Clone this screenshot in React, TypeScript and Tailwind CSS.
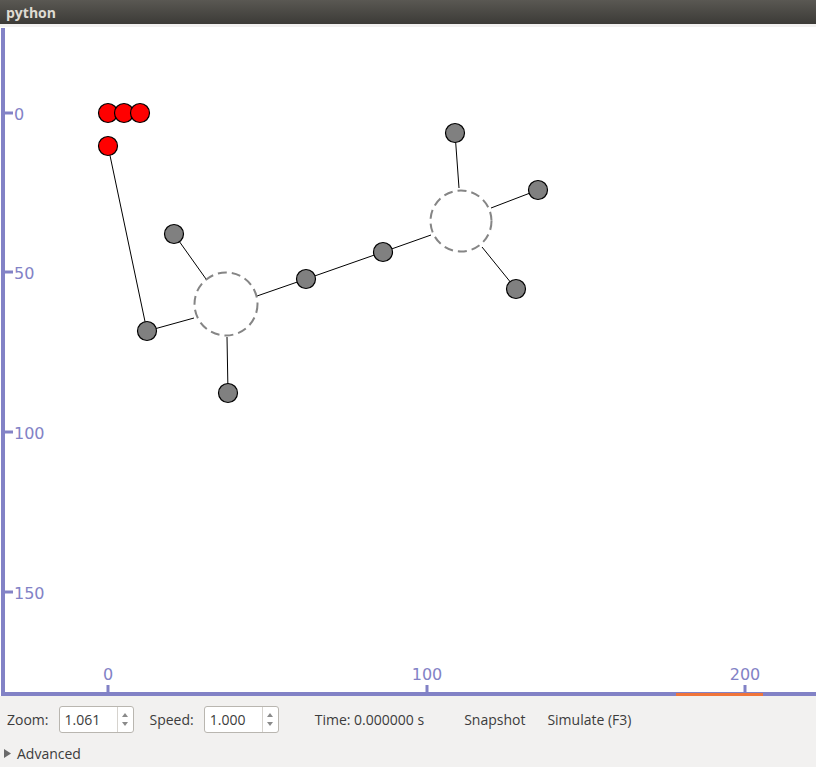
const RED = [
  [108, 113],
  [124, 113],
  [140, 113],
  [108, 146],
];

const GRAY = [
  [174, 234],
  [147, 331],
  [228, 393],
  [306, 279],
  [383, 252],
  [455, 133],
  [538, 190],
  [516, 289],
];

const LINKS = [
  [108, 146, 147, 331],
  [147, 331, 194, 318],
  [174, 234, 206, 279],
  [228, 393, 227, 337],
  [257, 296, 306, 279],
  [306, 279, 383, 252],
  [383, 252, 431, 235],
  [455, 133, 459, 188],
  [538, 190, 491, 208],
  [516, 289, 482, 247],
];

const Y_TICKS = [
  { label: "0", y: 113 },
  { label: "50", y: 272 },
  { label: "100", y: 432 },
  { label: "150", y: 592 },
];

const X_TICKS = [
  { label: "0", x: 108 },
  { label: "100", x: 427 },
  { label: "200", x: 745 },
];

const AXIS = "#8282c6";
const TOP = 27;

function SpinBox({ value }: { value: string }) {
  return (
    <div className="flex h-[27px] w-[75px] items-stretch rounded-[3px] border border-[#b9b6b0] bg-white">
      <div className="flex flex-1 items-center pl-[5px] text-[14px] text-[#3c3c3c]">
        {value}
      </div>
      <div className="flex w-[16px] flex-col items-center justify-center gap-[5px] border-l border-[#d6d3ce]">
        <svg width="6" height="4" viewBox="0 0 6 4">
          <path d="M0 4 L3 0 L6 4 Z" fill="#8a8a8a" />
        </svg>
        <svg width="6" height="4" viewBox="0 0 6 4">
          <path d="M0 0 L3 4 L6 0 Z" fill="#8a8a8a" />
        </svg>
      </div>
    </div>
  );
}

function Canvas() {
  return (
    <svg width="816" height="669" className="block bg-white">
      {LINKS.map(([x1, y1, x2, y2], i) => (
        <line
          key={i}
          x1={x1}
          y1={y1 - TOP}
          x2={x2}
          y2={y2 - TOP}
          stroke="#000"
          strokeWidth="1"
        />
      ))}
      <circle
        cx={226}
        cy={304 - TOP}
        r={31.5}
        fill="none"
        stroke="#858585"
        strokeWidth="2"
        strokeDasharray="9 5"
      />
      <circle
        cx={461}
        cy={221 - TOP}
        r={30.5}
        fill="none"
        stroke="#858585"
        strokeWidth="2"
        strokeDasharray="9 5"
      />
      {GRAY.map(([x, y], i) => (
        <circle
          key={i}
          cx={x}
          cy={y - TOP}
          r={9.5}
          fill="#808080"
          stroke="#000"
          strokeWidth="1.2"
        />
      ))}
      {RED.map(([x, y], i) => (
        <circle
          key={i}
          cx={x}
          cy={y - TOP}
          r={9.5}
          fill="#ff0000"
          stroke="#000"
          strokeWidth="1.2"
        />
      ))}

      {/* axes */}
      <rect x="1" y="1" width="4" height="668" fill={AXIS} />
      <rect x="1" y="665" width="815" height="4" fill={AXIS} />
      <rect x="676" y="666" width="87" height="3" fill="#f0753a" />
      {Y_TICKS.map((t) => (
        <g key={t.label}>
          <rect x="5" y={t.y - TOP - 1.5} width="8" height="3" fill={AXIS} />
          <text
            x="14"
            y={t.y - TOP + 7}
            fontSize="16"
            fill={AXIS}
            fontFamily="'DejaVu Sans', sans-serif"
          >
            {t.label}
          </text>
        </g>
      ))}
      {X_TICKS.map((t) => (
        <g key={t.label}>
          <rect x={t.x - 1.5} y="658" width="3" height="7" fill={AXIS} />
          <text
            x={t.x}
            y="653"
            fontSize="16"
            fill={AXIS}
            textAnchor="middle"
            fontFamily="'DejaVu Sans', sans-serif"
          >
            {t.label}
          </text>
        </g>
      ))}
    </svg>
  );
}

export default function App() {
  return (
    <div
      className="flex h-[767px] w-[816px] flex-col overflow-hidden bg-[#f2f1f0] text-[#3c3c3c]"
      style={{ fontFamily: "'Open Sans', 'DejaVu Sans', sans-serif" }}
    >
      <div className="flex h-[24px] items-center bg-gradient-to-b from-[#5a5853] to-[#3c3b37] pl-[6px] text-[14px] font-bold text-[#dfdbd2]">
        python
      </div>
      <div className="h-[3px]" />
      <Canvas />
      <div className="flex h-[71px] flex-col">
        <div className="flex h-[47px] items-center pl-[7px] text-[14px]">
          <span>Zoom:</span>
          <div className="ml-[10px]">
            <SpinBox value="1.061" />
          </div>
          <span className="ml-[16px]">Speed:</span>
          <div className="ml-[10px]">
            <SpinBox value="1.000" />
          </div>
          <span className="ml-[36px]">Time: 0.000000 s</span>
          <span className="ml-[40px]">Snapshot</span>
          <span className="ml-[22px]">Simulate (F3)</span>
        </div>
        <div className="flex items-center gap-[6px] pl-[4px] text-[14px]">
          <svg width="7" height="9" viewBox="0 0 7 9">
            <path d="M0 0 L7 4.5 L0 9 Z" fill="#6a6a6a" />
          </svg>
          <span>Advanced</span>
        </div>
      </div>
    </div>
  );
}
